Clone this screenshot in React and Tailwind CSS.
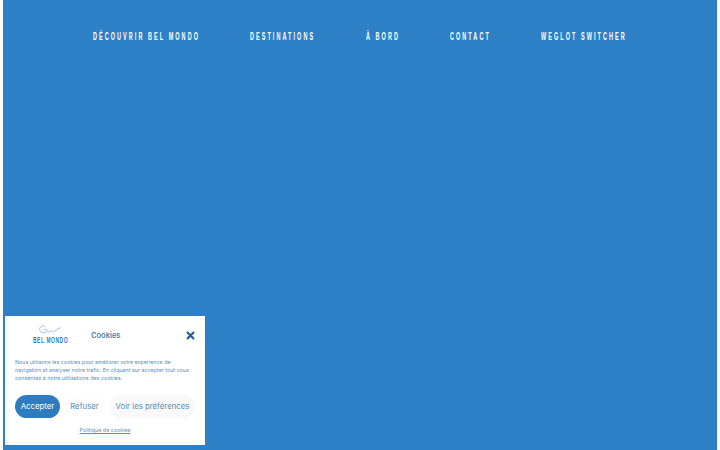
export default function App() {
  const nav = [
    ["DÉCOUVRIR BEL MONDO", "w-[106px]"],
    ["DESTINATIONS", "w-[66px]"],
    ["À BORD", "w-[33px]"],
    ["CONTACT", "w-[41px]"],
    ["WEGLOT SWITCHER", "w-[86px]"],
  ];
  return (
    <div className="relative h-[450px] w-[720px] overflow-hidden bg-white">
      <div className="mx-[3px] h-[450px] w-[714px] bg-[#2e80c6]">
        <nav className="flex items-center gap-[50.5px] pl-[90px] pt-[29px] font-['Liberation_Sans',sans-serif] text-[11px] font-bold leading-[14px] tracking-[4.1px] text-white">
          {nav.map(([n, w]) => (
            <a key={n} className={`block shrink-0 ${w}`}>
              <span className="block origin-left scale-x-[0.5] whitespace-nowrap">{n}</span>
            </a>
          ))}
        </nav>
      </div>
      <div className="absolute left-[5px] top-[316px] flex h-[129px] w-[200px] flex-col bg-white px-[10px] font-['Inter',sans-serif] text-[#2e80c6]">
        <div className="flex items-center pt-[9px]">
          <div className="flex w-[70px] flex-col items-center">
            <svg width="24" height="11" viewBox="0 0 24 11" fill="none" stroke="#7aaedb" strokeWidth="0.7" className="mr-[2px]">
              <path d="M8 1.2C4 0 1.5 3 3.2 6C5 8.6 9 8 10.5 5.5C9.5 4 7 4 6.5 5.5M10.5 5.5C11.5 7.5 13 7.5 14.5 5.5C15.5 7.5 17 7.5 18.5 5.2C20 4.2 22 3.2 24 2.6" />
            </svg>
            <span className="w-[34px] whitespace-nowrap font-['Liberation_Sans',sans-serif] text-[9px] font-bold leading-[9px] tracking-[1px] text-[#2e80c6]">
              <span className="block origin-left scale-x-[0.55]">BEL MONDO</span>
            </span>
          </div>
          <h2 className="ml-[6px] mt-[2px] flex-1 text-[7.5px] font-semibold leading-none text-[#4f83ac]">Cookies</h2>
          <svg width="9" height="9" viewBox="0 0 9 9" stroke="#1f5f96" strokeWidth="2.2">
            <path d="M1 1L8 8M8 1L1 8" />
          </svg>
        </div>
        <p className="mt-[13px] text-[5.35px] leading-[8px] text-[#5c8fb8]">
          Nous utilisons les cookies pour améliorer votre expérience de navigation et analyser notre trafic. En cliquant sur accepter tout vous consentez à notre utilisations des cookies.
        </p>
        <div className="mt-[13px] flex items-center text-[7.8px] leading-none">
          <button className="h-[23px] w-[45px] shrink-0 rounded-full bg-[#2e7cc0] pt-px text-white">Accepter</button>
          <button className="ml-[4px] h-[23px] w-[41px] shrink-0 rounded-full bg-[#fdfdfd] pt-px text-[#5c8fb8]">Refuser</button>
          <button className="ml-[5px] h-[23px] w-[85px] shrink-0 whitespace-nowrap rounded-full bg-[#f9f9f9] pt-px text-[#5c8fb8]">Voir les préférences</button>
        </div>
        <a className="mt-[8px] text-center text-[5.35px] leading-[8px] text-[#5c8fb8] underline">Politique de cookies</a>
      </div>
    </div>
  );
}
